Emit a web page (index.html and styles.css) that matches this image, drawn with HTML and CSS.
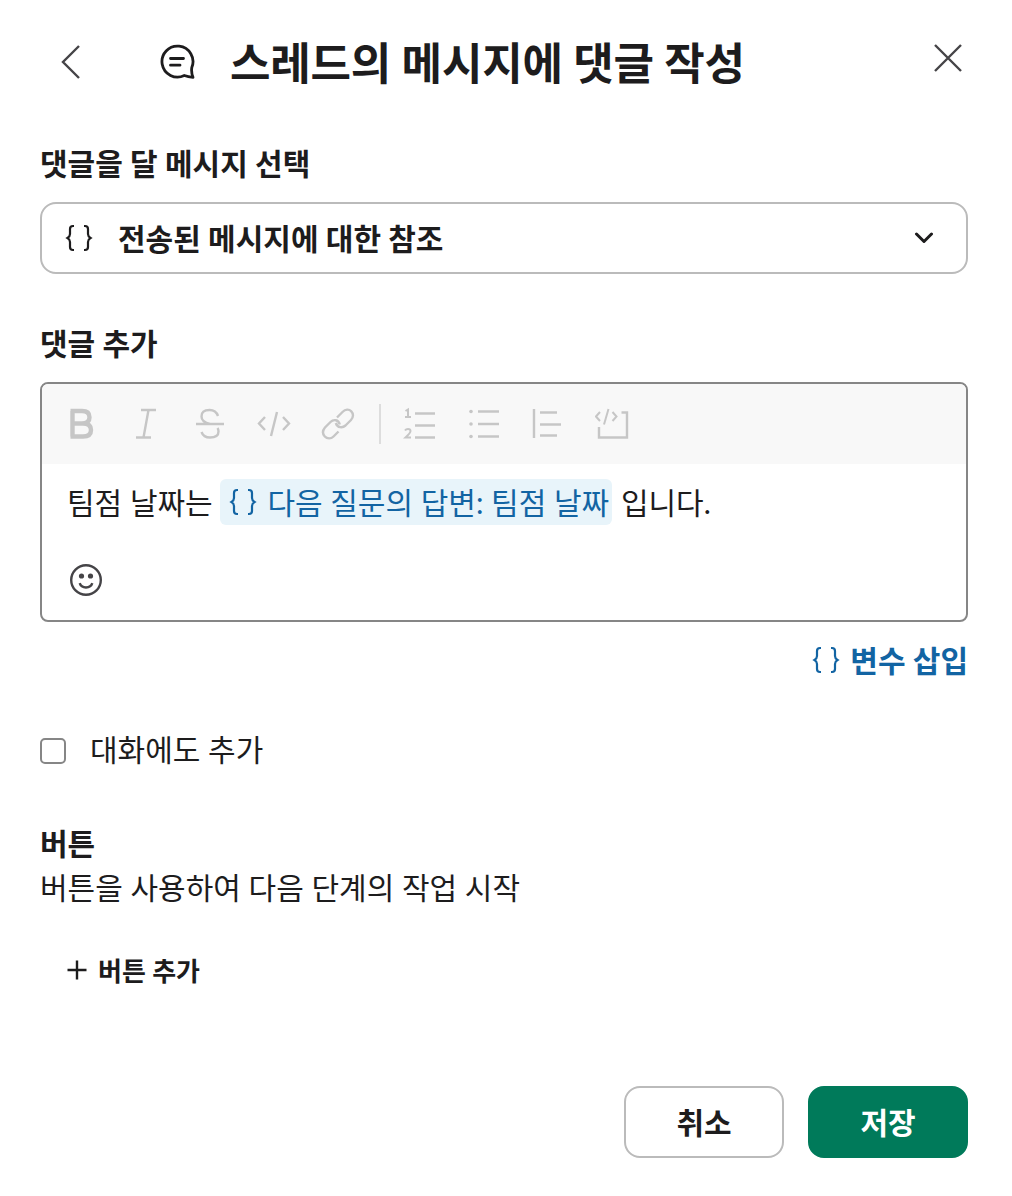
FILE: index.html
```html
<!DOCTYPE html>
<html lang="ko">
<head>
<meta charset="utf-8">
<title>스레드의 메시지에 댓글 작성</title>
<link rel="stylesheet" href="styles.css">
</head>
<body>
<svg width="0" height="0" class="defs" aria-hidden="true">
  <symbol id="braces" viewBox="0 0 28 28">
    <path d="M9 2H8Q5 2 5 5V10Q5 12.500 2.500 14Q5 15.500 5 18V23Q5 26 8 26H9M19 2H20Q23 2 23 5V10Q23 12.500 25.500 14Q23 15.500 23 18V23Q23 26 20 26H19"/>
  </symbol>
</svg>
<main class="dialog">
  <header class="header">
    <button class="icon-button back" aria-label="뒤로"><svg class="icon" width="22" height="36" viewBox="0 0 22 36"><path d="M19 2L3 18L19 34"/></svg></button>
    <svg class="icon thread" width="36" height="36" viewBox="0 0 36 36"><path d="M32.800 23.500A15.500 15.500 0 1 0 25.300 31.500C28.500 32.600 31 33 34 33.300C32.800 30.500 32.300 27 32.800 23.500ZM11.500 14.500H24.500M11.500 21.200H21"/></svg>
    <h1 class="title">스레드의 메시지에 댓글 작성</h1>
    <button class="icon-button close" aria-label="닫기"><svg class="icon" width="30" height="30" viewBox="0 0 30 30"><path d="M2 2L28 28M28 2L2 28"/></svg></button>
  </header>

  <section class="field">
    <h2 class="label">댓글을 달 메시지 선택</h2>
    <button class="select">
      <svg class="icon braces" width="28" height="28"><use href="#braces"/></svg>
      <span class="select-value">전송된 메시지에 대한 참조</span>
      <svg class="icon chevron" width="20" height="12" viewBox="0 0 20 12"><path d="M2.500 2L10 9.500L17.500 2"/></svg>
    </button>
  </section>

  <section class="field comment">
    <h2 class="label">댓글 추가</h2>
    <div class="editor">
      <div class="toolbar">
        <svg class="tool" viewBox="0 0 36 36"><path class="heavy" d="M8.500 5V30.500M6.500 5H18Q25.500 5 25.500 11.200T18 17.500H8.500M8.500 17.500H19Q27 17.500 27 24T19 30.500H6.500"/></svg>
        <svg class="tool" viewBox="0 0 36 36"><path d="M13 4H28M8 31.500H23M20.500 4L15.500 31.500"/></svg>
        <svg class="tool" viewBox="0 0 36 36"><path d="M26 10Q24 4 17.500 4Q9.500 4 9.500 10.500Q9.500 16 18 18M4 18H32M9.500 26Q11.500 31.500 18 31.500Q26.500 31.500 26.500 25.500Q26.500 23.500 25.500 22"/></svg>
        <svg class="tool" viewBox="0 0 36 36"><path d="M9 11L3 17.500L9 24M27 11L33 17.500L27 24M21 6L15 30"/></svg>
        <svg class="tool" viewBox="0 0 36 36"><path d="M17 11.500L22.500 6C25.500 3 29 3 31.300 5.300S33.500 11.500 31 14L25.500 19.500C22.500 22.300 17.500 22 15.800 17M19.800 18.500C18.500 13.500 13.500 13 10.500 16L5 21.500C2.500 24.500 2.500 28 4.800 30.500S11 33 13.500 30.500L18.500 25.500"/></svg>
        <span class="divider"></span>
        <svg class="tool" viewBox="0 0 36 36"><path d="M12 7.500H32M12 19.500H32M12 31.500H32"/><path class="fine" d="M2.500 5L5 3.500V11M2 11H8M2 24.500Q3 23 5 23Q7.500 23 7.500 25Q7.500 27 2.500 31.500H8"/></svg>
        <svg class="tool" viewBox="0 0 36 36"><path d="M11 5.500H32M11 18H32M11 30.500H32"/><g class="dots"><circle cx="4" cy="5.500" r="1.800"/><circle cx="4" cy="18" r="1.800"/><circle cx="4" cy="30.500" r="1.800"/></g></svg>
        <svg class="tool" viewBox="0 0 36 36"><path d="M3 3V32M9 6.500H26M9 18.500H30M9 29.500H26"/></svg>
        <svg class="tool" viewBox="0 0 36 36"><path d="M26.500 6.500H32V31.500H4V21"/><path class="fine" d="M5 6L1 10.500L5 15M17.500 6L21.500 10.500L17.500 15M13.500 3L9 18.500"/></svg>
      </div>
      <p class="message">팀점 날짜는 <span class="chip"><svg class="icon braces" width="28" height="28"><use href="#braces"/></svg><span>다음 질문의 답변: 팀점 날짜</span></span> 입니다.</p>
      <button class="icon-button emoji" aria-label="이모티콘"><svg class="icon" width="34" height="34" viewBox="0 0 34 34"><circle cx="17" cy="17" r="14.800"/><path d="M10.700 20.200Q12 24.500 17 24.500T23.300 20.200"/><circle class="dot" cx="12.500" cy="13" r="2.600"/><circle class="dot" cx="21.500" cy="13" r="2.600"/></svg></button>
    </div>
    <button class="insert"><svg class="icon braces" width="28" height="28"><use href="#braces"/></svg><span>변수 삽입</span></button>
  </section>

  <label class="check"><input type="checkbox" class="checkbox"><span>대화에도 추가</span></label>

  <section class="actions">
    <h2 class="label">버튼</h2>
    <p class="description">버튼을 사용하여 다음 단계의 작업 시작</p>
    <button class="add"><svg class="icon" width="20" height="20" viewBox="0 0 20 20"><path d="M10 .5V19.500M.5 10H19.500"/></svg><span>버튼 추가</span></button>
  </section>

  <footer class="footer">
    <button class="button">취소</button>
    <button class="button primary">저장</button>
  </footer>
</main>
</body>
</html>
```
FILE: styles.css
```css
* { box-sizing: border-box; }

body {
  margin: 0;
  background: #fff;
  color: #1d1c1d;
  font: 30px/44px Lato, "Noto Sans CJK KR", sans-serif;
}

h1, h2, p { margin: 0; }

button {
  padding: 0;
  border: 0;
  background: none;
  color: inherit;
  font: inherit;
}

svg { display: block; flex: none; }
.defs { position: absolute; }

.icon, .tool {
  fill: none;
  stroke: currentColor;
  stroke-width: 2.4;
}

.dialog {
  display: flex;
  flex-direction: column;
  height: 1196px;
  padding: 29px 44px 38px 40px;
}

.header {
  display: flex;
  align-items: center;
  height: 64px;
}

.icon-button { display: flex; color: #454447; }
.back { margin: 2px 0 0 20px; }

.thread {
  margin: 2px 0 0 77px;
  stroke-width: 2.8;
  stroke-linecap: round;
  stroke-linejoin: round;
}

.title {
  margin: 4px 0 0 35px;
  font-size: 44px;
  line-height: 64px;
  font-weight: 700;
  letter-spacing: -0.2px;
  white-space: nowrap;
}

.close { margin: -6px 5px 0 auto; }

.field { margin-top: 48px; }
.comment { margin-top: 47px; }

.label {
  font-size: 30px;
  line-height: 44px;
  font-weight: 700;
}

.select {
  display: flex;
  align-items: center;
  width: 100%;
  height: 72px;
  margin-top: 17px;
  padding: 0 32px 0 23px;
  border: 2px solid #bbb;
  border-radius: 16px;
  font-weight: 700;
}

.braces { stroke-width: 2.2; }
.select-value { flex: 1; margin-left: 25px; text-align: left; }
.chevron { stroke-width: 3; stroke-linecap: round; stroke-linejoin: round; }

.editor {
  height: 240px;
  margin-top: 17px;
  border: 2px solid #868686;
  border-radius: 8px;
}

.toolbar {
  display: flex;
  align-items: center;
  gap: 28px;
  height: 80px;
  padding-left: 22px;
  border-radius: 6px 6px 0 0;
  background: #f8f8f8;
  color: #c6c6c6;
}

.tool { width: 36px; height: 36px; stroke-width: 2.4; }
.tool .heavy { stroke-width: 4.4; }
.tool .fine { stroke-width: 2; }
.tool .dots { fill: currentColor; stroke: none; }

.divider {
  width: 2px;
  height: 40px;
  margin: 0 -6px 0 -5px;
  background: #ddd;
}

.message {
  display: flex;
  align-items: center;
  height: 46px;
  margin: 15px 0 0 25px;
  white-space: pre;
}

.chip {
  display: flex;
  align-items: center;
  gap: 10px;
  height: 46px;
  margin-right: 1px;
  padding: 0 3px 0 9px;
  border-radius: 6px;
  background: #e8f4fa;
  color: #1264a3;
}

.emoji { margin: 38px 0 0 27px; }
.emoji .dot { fill: currentColor; stroke: none; }

.insert {
  display: flex;
  align-items: center;
  gap: 10px;
  margin: 16px 0 0 auto;
  color: #1264a3;
  font-weight: 700;
}

.check {
  display: flex;
  align-items: center;
  gap: 24px;
  margin-top: 45px;
}

.checkbox {
  appearance: none;
  width: 26px;
  height: 26px;
  margin: 4px 0 0;
  border: 2px solid #868686;
  border-radius: 5px;
}

.actions { margin-top: 50px; }

.add {
  display: flex;
  align-items: center;
  gap: 11px;
  margin: 38px 0 0 27px;
  font-size: 26px;
  font-weight: 700;
}

.add span { padding-top: 2px; }

.footer {
  display: flex;
  justify-content: flex-end;
  gap: 24px;
  margin-top: auto;
}

.button {
  width: 160px;
  height: 72px;
  border: 2px solid #bbb;
  border-radius: 16px;
  font-weight: 700;
}

.primary {
  border-color: #007a5a;
  background: #007a5a;
  color: #fff;
}
```
